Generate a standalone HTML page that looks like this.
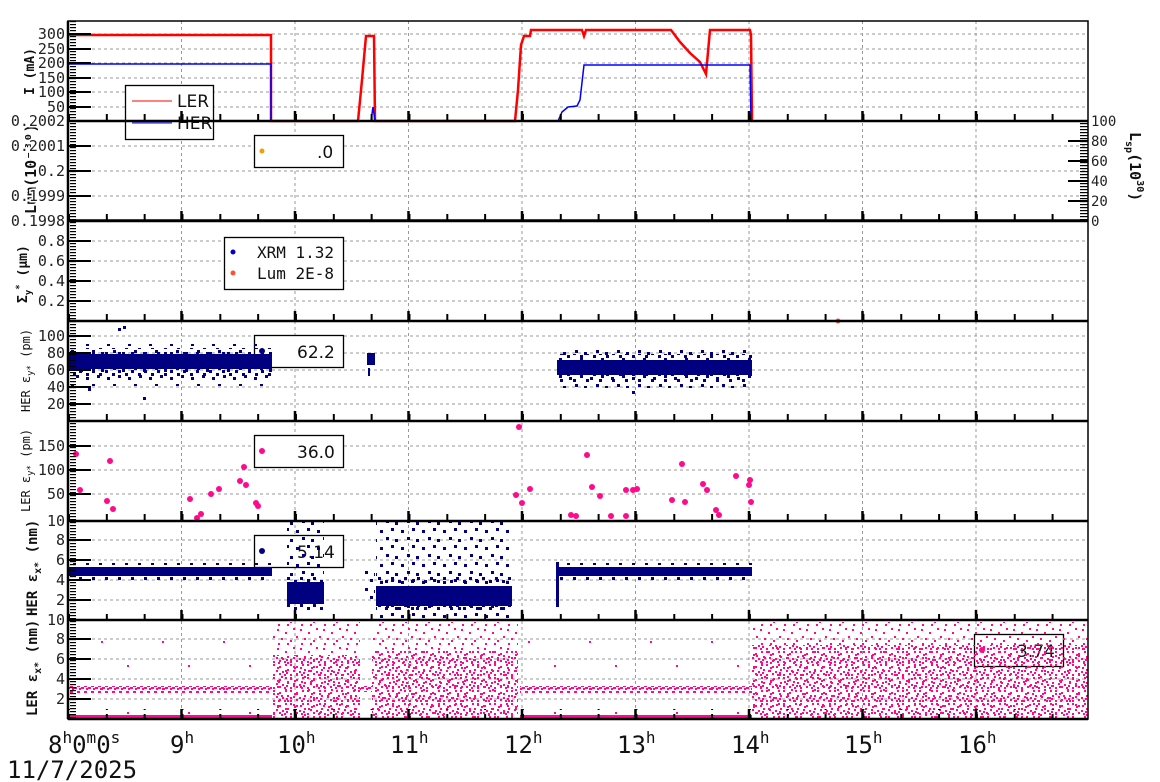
<!DOCTYPE html>
<html><head><meta charset="utf-8"><style>
html,body{margin:0;padding:0;background:#fff;}
svg{display:block;}
text{font-family:"DejaVu Sans Mono","Liberation Mono",monospace;}
</style></head><body>
<svg width="1160" height="782" viewBox="0 0 1160 782" xmlns="http://www.w3.org/2000/svg">
<defs>
<pattern id="pS" width="23" height="19" patternUnits="userSpaceOnUse">
<g fill="#ff0a8c"><rect x="1" y="2" width="2" height="2"/><rect x="9" y="5" width="2" height="2"/><rect x="17" y="1" width="2" height="2"/><rect x="5" y="11" width="2" height="2"/><rect x="14" y="13" width="2" height="2"/><rect x="20" y="9" width="2" height="2"/><rect x="11" y="16" width="2" height="2"/><rect x="2" y="16" width="2" height="2"/></g></pattern>
<pattern id="pV" width="61" height="47" patternUnits="userSpaceOnUse">
<g fill="#ff0a8c"><rect x="5" y="7" width="2" height="2"/><rect x="40" y="30" width="2" height="2"/></g></pattern>
<pattern id="pD" width="17" height="13" patternUnits="userSpaceOnUse">
<g fill="#ff0a8c"><rect x="1" y="1" width="2" height="2"/><rect x="7" y="3" width="2" height="2"/><rect x="13" y="1" width="2" height="2"/><rect x="4" y="7" width="2" height="2"/><rect x="10" y="8" width="2" height="2"/><rect x="15" y="6" width="2" height="2"/><rect x="1" y="11" width="2" height="2"/><rect x="12" y="11" width="2" height="2"/><rect x="7" y="10" width="2" height="2"/><rect x="5" y="4" width="2" height="2"/><rect x="14" y="9" width="2" height="2"/></g></pattern>
<pattern id="pB" width="7" height="6" patternUnits="userSpaceOnUse">
<g fill="#ff0a8c"><rect x="0" y="1" width="3" height="2"/><rect x="4" y="3" width="3" height="2"/><rect x="2" y="4" width="2" height="2"/></g></pattern>
<pattern id="nS" width="21" height="17" patternUnits="userSpaceOnUse">
<g fill="#000080"><rect x="2" y="3" width="3" height="3"/><rect x="13" y="1" width="3" height="3"/><rect x="8" y="10" width="3" height="3"/><rect x="17" y="12" width="3" height="3"/></g></pattern>
<pattern id="nE" width="13" height="9" patternUnits="userSpaceOnUse">
<g fill="#000080"><rect x="1" y="1" width="3" height="3"/><rect x="8" y="4" width="3" height="3"/></g></pattern>
<pattern id="tickL" width="10" height="3" patternUnits="userSpaceOnUse"><rect x="0" y="0" width="8" height="1.2" fill="#000"/></pattern>
<pattern id="tickB" x="68" width="37.83" height="10" patternUnits="userSpaceOnUse"><rect x="0" y="4" width="2" height="6" fill="#000"/></pattern>
</defs>

<!-- grid -->
<g stroke="#999" stroke-width="1" stroke-dasharray="3,3" fill="none">
<path d="M181.5 21V719M295 21V719M408.5 21V719M522 21V719M635.5 21V719M749 21V719M862.5 21V719M976 21V719"/>
<path d="M68 34H1088M68 49H1088M68 63H1088M68 78H1088M68 92H1088M68 107H1088"/>
<path d="M68 146H1088M68 171H1088M68 196H1088"/>
<path d="M68 241H1088M68 261H1088M68 281H1088M68 301H1088"/>
<path d="M68 336H1088M68 353H1088M68 370H1088M68 387H1088M68 404H1088"/>
<path d="M68 446H1088M68 470H1088M68 494H1088"/>
<path d="M68 540H1088M68 560H1088M68 580H1088M68 600H1088"/>
<path d="M68 639H1088M68 659H1088M68 679H1088M68 699H1088"/>
</g>

<!-- Lum label (behind tick labels) -->
<text transform="translate(36,214) rotate(-90)" font-weight="bold" font-size="15" fill="#111">Lum(10⁻³⁰)</text>

<!-- legends -->
<g fill="#fff" stroke="#000" stroke-width="1.3">
<rect x="125.5" y="85.5" width="88" height="54"/>
<rect x="254.5" y="135.5" width="89" height="32"/>
<rect x="224.5" y="237.5" width="119" height="52"/>
<rect x="254.5" y="335.5" width="89" height="32"/>
<rect x="254.5" y="435.5" width="89" height="32"/>
<rect x="254.5" y="535.5" width="89" height="32"/>
<rect x="974.5" y="634.5" width="89" height="32"/>
</g>
<g font-size="17" fill="#111">
<line x1="132" y1="101" x2="172" y2="101" stroke="#f00"/><text x="177" y="107" style="font-family:'DejaVu Sans',sans-serif">LER</text>
<line x1="132" y1="123" x2="172" y2="123" stroke="#00f"/><text x="177" y="129" style="font-family:'DejaVu Sans',sans-serif">HER</text>
<circle cx="262" cy="151" r="2.5" fill="#f0a000"/><text x="317" y="158" style="font-family:'DejaVu Sans',sans-serif">.0</text>
<circle cx="233" cy="252" r="2.5" fill="#00c"/><text x="257" y="258" font-size="16">XRM 1.32</text>
<circle cx="233" cy="273" r="2.5" fill="#ff5030"/><text x="257" y="279" font-size="16">Lum 2E-8</text>
<circle cx="262" cy="351" r="3" fill="#000080"/><text x="297" y="358" style="font-family:'DejaVu Sans',sans-serif">62.2</text>
<circle cx="262" cy="451" r="3" fill="#ff0a8c"/><text x="297" y="458" style="font-family:'DejaVu Sans',sans-serif">36.0</text>
<circle cx="262" cy="551" r="3" fill="#000080"/><text x="297" y="558" style="font-family:'DejaVu Sans',sans-serif">5.14</text>
<circle cx="982" cy="650" r="3" fill="#ff0a8c"/><text x="1017" y="657" style="font-family:'DejaVu Sans',sans-serif">3.74</text>
</g>

<!-- P1 currents -->
<polyline fill="none" stroke="#f00" stroke-width="2.5" points="68,35 271,35 271,121 358,121 362,80 366,36 374,36 375,121 515,121 518,90 521,45 524,36 530,36 531,30 582,30 584,36 586,30 671,30 680,42 690,53 700,62 706,74 708,52 710,30 750,30 751,35 752,121"/>
<polyline fill="none" stroke="#00f" stroke-width="1.5" points="68,64 271,64 271,121 371,121 373,107 375,121 558,121 562,112 568,107 577,106 580,100 584,65 750,65 751,121 1088,121"/>

<!-- P2 -->
<line x1="68" y1="220" x2="1088" y2="220" stroke="#3a6a2a" stroke-width="2"/>

<!-- P4 HER ey -->
<rect x="68" y="354" width="204" height="15" fill="#000080"/>
<rect x="68" y="348" width="204" height="28" fill="url(#nE)"/>
<rect x="68" y="344" width="204" height="42" fill="url(#nS)"/>
<rect x="367" y="353" width="8" height="12" fill="#000080"/>
<rect x="557" y="360" width="195" height="15" fill="#000080"/>
<rect x="557" y="354" width="195" height="28" fill="url(#nE)"/>
<rect x="557" y="350" width="195" height="38" fill="url(#nS)"/>
<g fill="#000080"><rect x="118" y="328" width="3" height="3"/><rect x="123" y="326" width="3" height="3"/><rect x="143" y="397" width="3" height="3"/><rect x="88" y="388" width="3" height="3"/><rect x="368" y="368" width="2" height="8"/><rect x="632" y="391" width="3" height="3"/></g>
<circle cx="838" cy="321" r="2.5" fill="#ff5030"/>

<!-- P5 LER ey -->
<g fill="#ff0a8c">
<circle cx="76" cy="454" r="3"/><circle cx="80" cy="490" r="3"/><circle cx="107" cy="501" r="3"/><circle cx="110" cy="461" r="3"/><circle cx="113" cy="509" r="3"/><circle cx="190" cy="499" r="3"/><circle cx="197" cy="518" r="3"/><circle cx="201" cy="514" r="3"/><circle cx="211" cy="494" r="3"/><circle cx="219" cy="489" r="3"/><circle cx="240" cy="481" r="3"/><circle cx="244" cy="467" r="3"/><circle cx="246" cy="485" r="3"/><circle cx="256" cy="503" r="3"/><circle cx="258" cy="506" r="3"/><circle cx="516" cy="495" r="3"/><circle cx="519" cy="427" r="3"/><circle cx="522" cy="503" r="3"/><circle cx="530" cy="489" r="3"/><circle cx="571" cy="515" r="3"/><circle cx="576" cy="516" r="3"/><circle cx="587" cy="455" r="3"/><circle cx="592" cy="487" r="3"/><circle cx="600" cy="496" r="3"/><circle cx="611" cy="516" r="3"/><circle cx="626" cy="516" r="3"/><circle cx="626" cy="490" r="3"/><circle cx="633" cy="490" r="3"/><circle cx="637" cy="489" r="3"/><circle cx="672" cy="500" r="3"/><circle cx="682" cy="464" r="3"/><circle cx="685" cy="502" r="3"/><circle cx="703" cy="484" r="3"/><circle cx="707" cy="490" r="3"/><circle cx="716" cy="510" r="3"/><circle cx="719" cy="515" r="3"/><circle cx="736" cy="476" r="3"/><circle cx="749" cy="485" r="3"/><circle cx="750" cy="480" r="3"/><circle cx="751" cy="502" r="3"/>
</g>

<!-- P6 HER ex -->
<rect x="68" y="567" width="204" height="9" fill="#000080"/>
<rect x="68" y="563" width="204" height="17" fill="url(#nE)"/>
<rect x="287" y="582" width="37" height="22" fill="#000080"/>
<rect x="287" y="574" width="37" height="36" fill="url(#nE)"/>
<rect x="287" y="522" width="37" height="58" fill="url(#nS)"/>
<rect x="365" y="565" width="10" height="40" fill="url(#nS)"/>
<rect x="376" y="586" width="136" height="20" fill="#000080"/>
<rect x="376" y="576" width="136" height="36" fill="url(#nE)"/>
<rect x="376" y="522" width="136" height="98" fill="url(#nS)"/>
<rect x="556" y="567" width="196" height="9" fill="#000080"/>
<rect x="556" y="563" width="196" height="17" fill="url(#nE)"/>
<rect x="556" y="562" width="3" height="45" fill="#000080"/>

<!-- P7 LER ex -->
<rect x="68" y="686" width="204" height="7" fill="url(#pB)"/>
<rect x="68" y="715" width="204" height="4" fill="#ff0a8c"/>
<rect x="68" y="640" width="204" height="75" fill="url(#pV)"/>
<rect x="520" y="686" width="232" height="7" fill="url(#pB)"/>
<rect x="520" y="715" width="232" height="4" fill="#ff0a8c"/>
<rect x="520" y="640" width="232" height="75" fill="url(#pV)"/>
<rect x="272" y="622" width="88" height="97" fill="url(#pS)"/>
<rect x="272" y="655" width="88" height="64" fill="url(#pD)"/>
<rect x="360" y="686" width="12" height="6" fill="url(#pB)"/>
<rect x="372" y="622" width="146" height="97" fill="url(#pS)"/>
<rect x="372" y="650" width="146" height="69" fill="url(#pD)"/>
<rect x="752" y="622" width="336" height="97" fill="url(#pS)"/>
<rect x="752" y="645" width="336" height="74" fill="url(#pD)"/>

<!-- axes frames -->
<g stroke="#000" fill="none">
<rect x="68" y="21" width="1020" height="698" stroke-width="1.5"/>
<path stroke-width="2.5" d="M68 121H1088M68 221H1088M68 321H1088M68 421H1088M68 521H1088M68 620H1088M68 719H1088"/>
<line x1="68" y1="21" x2="68" y2="719" stroke-width="2.5"/>
</g>
<rect x="68" y="21" width="8" height="698" fill="url(#tickL)"/>
<g stroke="#000" stroke-width="2">
<path d="M68 34H91M68 49H91M68 63H91M68 78H91M68 92H91M68 107H91M68 146H91M68 171H91M68 196H91M68 241H91M68 261H91M68 281H91M68 301H91M68 336H91M68 353H91M68 370H91M68 387H91M68 404H91M68 446H91M68 470H91M68 494H91M68 540H91M68 560H91M68 580H91M68 600H91M68 639H91M68 659H91M68 679H91M68 699H91"/>
<path d="M1088 141H1068M1088 161H1068M1088 181H1068M1088 201H1068"/>
</g>
<rect x="1080" y="121" width="8" height="100" fill="url(#tickL)"/>
<g fill="url(#tickB)">
<rect x="68" y="111" width="1020" height="10"/><rect x="68" y="211" width="1020" height="10"/><rect x="68" y="311" width="1020" height="10"/><rect x="68" y="411" width="1020" height="10"/><rect x="68" y="511" width="1020" height="10"/><rect x="68" y="610" width="1020" height="10"/><rect x="68" y="709" width="1020" height="10"/>
</g>
<g stroke="#000" stroke-width="2.5">
<path d="M181.5 121v-10M295 121v-10M408.5 121v-10M522 121v-10M635.5 121v-10M749 121v-10M862.5 121v-10M976 121v-10"/>
<path d="M181.5 221v-10M295 221v-10M408.5 221v-10M522 221v-10M635.5 221v-10M749 221v-10M862.5 221v-10M976 221v-10"/>
<path d="M181.5 321v-10M295 321v-10M408.5 321v-10M522 321v-10M635.5 321v-10M749 321v-10M862.5 321v-10M976 321v-10"/>
<path d="M181.5 421v-10M295 421v-10M408.5 421v-10M522 421v-10M635.5 421v-10M749 421v-10M862.5 421v-10M976 421v-10"/>
<path d="M181.5 521v-10M295 521v-10M408.5 521v-10M522 521v-10M635.5 521v-10M749 521v-10M862.5 521v-10M976 521v-10"/>
<path d="M181.5 620v-10M295 620v-10M408.5 620v-10M522 620v-10M635.5 620v-10M749 620v-10M862.5 620v-10M976 620v-10"/>
<path d="M181.5 719v-10M295 719v-10M408.5 719v-10M522 719v-10M635.5 719v-10M749 719v-10M862.5 719v-10M976 719v-10"/>
</g>

<!-- tick labels -->
<g font-size="15" fill="#222" text-anchor="end" stroke="#fff" stroke-width="3" paint-order="stroke">
<text x="65" y="39">300</text><text x="65" y="54">250</text><text x="65" y="68">200</text><text x="65" y="83">150</text><text x="65" y="97">100</text><text x="65" y="112">50</text>
<text x="65" y="126">0.2002</text><text x="65" y="151">0.2001</text><text x="65" y="176">0.2</text><text x="65" y="201">0.1999</text><text x="65" y="226">0.1998</text>
</g>
<g font-size="15" fill="#222" text-anchor="end">
<text x="65" y="246">0.8</text><text x="65" y="266">0.6</text><text x="65" y="286">0.4</text><text x="65" y="306">0.2</text>
<text x="65" y="341">100</text><text x="65" y="358">80</text><text x="65" y="375">60</text><text x="65" y="392">40</text><text x="65" y="409">20</text>
<text x="65" y="451">150</text><text x="65" y="475">100</text><text x="65" y="499">50</text><text x="65" y="526">10</text>
<text x="65" y="545">8</text><text x="65" y="565">6</text><text x="65" y="585">4</text><text x="65" y="605">2</text><text x="65" y="625">10</text>
<text x="65" y="644">8</text><text x="65" y="664">6</text><text x="65" y="684">4</text><text x="65" y="704">2</text>
</g>
<g font-size="14" fill="#222">
<text x="1091" y="126">100</text><text x="1091" y="146">80</text><text x="1091" y="166">60</text><text x="1091" y="186">40</text><text x="1091" y="206">20</text><text x="1091" y="226">0</text>
</g>
<g font-weight="bold" font-size="13" fill="#111">
<text transform="translate(34,95) rotate(-90)">I (mA)</text>
<text transform="translate(27,303) rotate(-90)">Σ<tspan font-size="9" dy="4">y</tspan><tspan font-size="9" dy="-9">*</tspan><tspan dy="5"> (μm)</tspan></text>
<text transform="translate(30,412) rotate(-90)" font-weight="normal" font-size="12">HER ε<tspan font-size="9" dy="3">y*</tspan><tspan dy="-3"> (pm)</tspan></text>
<text transform="translate(30,512) rotate(-90)" font-weight="normal" font-size="12">LER ε<tspan font-size="9" dy="3">y*</tspan><tspan dy="-3"> (pm)</tspan></text>
<text transform="translate(37,616) rotate(-90)" font-size="14">HER ε<tspan font-size="10" dy="4">x*</tspan><tspan dy="-4"> (nm)</tspan></text>
<text transform="translate(37,716) rotate(-90)" font-size="14">LER ε<tspan font-size="10" dy="4">x*</tspan><tspan dy="-4"> (nm)</tspan></text>
<text transform="translate(1130,132) rotate(90)" font-size="15">L<tspan font-size="10" dy="4">sp</tspan><tspan dy="-4">(10</tspan><tspan font-size="10" dy="-7">30</tspan><tspan dy="7">)</tspan></text>
</g>
<g font-size="24" fill="#111">
<text x="48" y="753">8<tspan font-size="16" dy="-10">h</tspan><tspan dy="10">0</tspan><tspan font-size="16" dy="-10">m</tspan><tspan dy="10">0</tspan><tspan font-size="16" dy="-10">s</tspan></text>
<text x="170" y="753">9<tspan font-size="16" dy="-10">h</tspan></text>
<text x="277" y="753">10<tspan font-size="16" dy="-10">h</tspan></text>
<text x="390" y="753">11<tspan font-size="16" dy="-10">h</tspan></text>
<text x="504" y="753">12<tspan font-size="16" dy="-10">h</tspan></text>
<text x="617" y="753">13<tspan font-size="16" dy="-10">h</tspan></text>
<text x="731" y="753">14<tspan font-size="16" dy="-10">h</tspan></text>
<text x="844" y="753">15<tspan font-size="16" dy="-10">h</tspan></text>
<text x="958" y="753">16<tspan font-size="16" dy="-10">h</tspan></text>
<text x="7" y="778">11/7/2025</text>
</g>
</svg>
</body></html>
